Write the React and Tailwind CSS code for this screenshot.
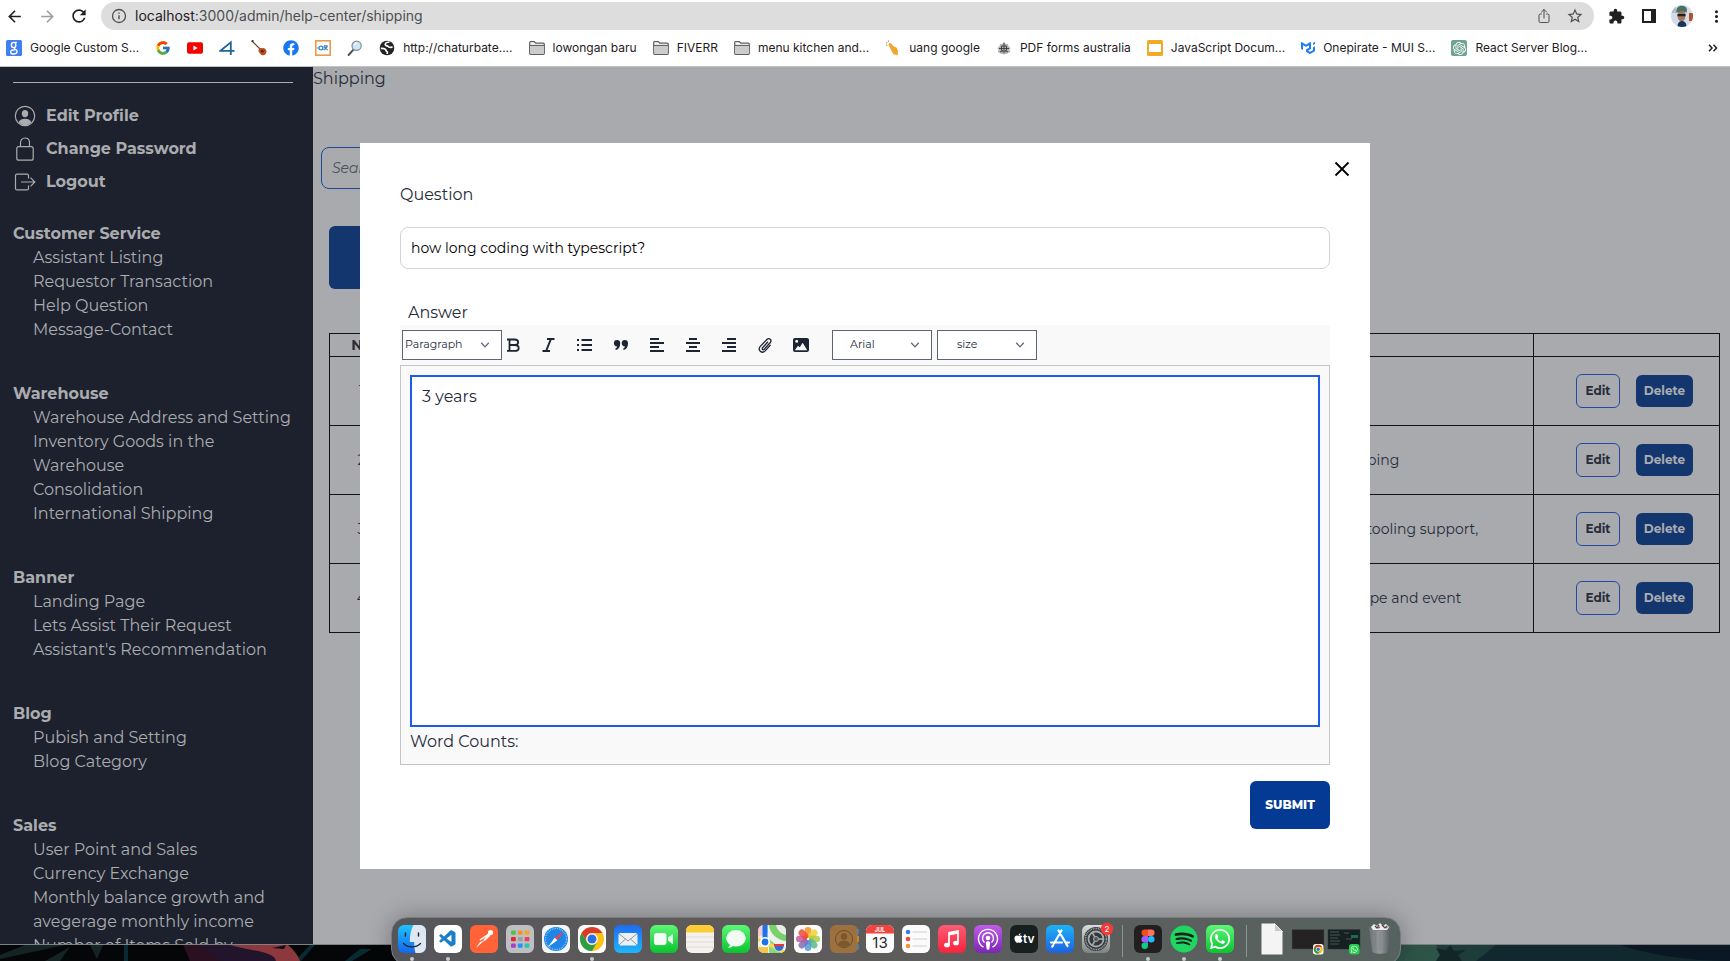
import React from "react";
import { FcGoogle } from "react-icons/fc";
import { FaSpotify, FaWhatsapp, FaApple, FaFacebook } from "react-icons/fa";
import { MdRefresh, MdArrowBack, MdArrowForward, MdExtension, MdStarBorder, MdMoreVert } from "react-icons/md";
import { SiOpenai, SiMui } from "react-icons/si";
import { IoShareOutline } from "react-icons/io5";
import { VscVscode } from "react-icons/vsc";

/* ---------- Browser chrome ---------- */

function FolderIcon() {
  return (
    <svg viewBox="0 0 16 16" className="size-4">
      <path d="M.7 13.3V2.6c0-.6.4-1 1-1h3.6l1.4 1.6h7.6c.6 0 1 .4 1 1v9.1c0 .6-.4 1-1 1H1.7c-.6 0-1-.4-1-1z" fill="#fff" stroke="#5c5c5c" strokeWidth="1.2" />
      <path d="M1.3 5.9h13.4v7.8H1.3z" fill="#cbcbcb" />
      <path d="M.7 5.4h14.6" stroke="#5c5c5c" strokeWidth="1.1" />
    </svg>
  );
}

function GoogleSquareIcon() {
  return (
    <svg viewBox="0 0 16 16" className="size-4">
      <rect width="16" height="16" rx="1.5" fill="#3f7ff0" />
      <g fill="none" stroke="#fff" strokeWidth="1.4">
        <ellipse cx="7.6" cy="5" rx="2.2" ry="2.6" />
        <path d="M8.3 2.4h2.6M9.2 7.3c-1 .8-1 1.2.2 2 1.4.8 1.7 1.4 1.7 2.3 0 1.600-1.600 2.400-3.500 2.400-2 0-3-.9-3-2.100 0-1.600 2-2.200 4.400-2.200" />
      </g>
    </svg>
  );
}

function YoutubeIcon() {
  return (
    <svg viewBox="0 0 16 16" className="size-4">
      <rect y="2.300" width="16" height="11.400" rx="2" fill="#f60000" />
      <path d="M6.400 5.600v4.800l4.200-2.400z" fill="#fff" />
    </svg>
  );
}

function FourIcon() {
  return (
    <svg viewBox="0 0 16 16" className="size-4">
      <path d="M11.800 15V2.300L1.500 10.800h14" fill="none" stroke="#1d6596" strokeWidth="1.800" />
    </svg>
  );
}

function GuitarIcon() {
  return (
    <svg viewBox="0 0 16 16" className="size-4">
      <path d="M1 1l9 9" stroke="#6b3a1e" strokeWidth="1.200" />
      <path d="M.5 1.500L2.500.5" stroke="#3b2a20" strokeWidth="1.500" />
      <path d="M8.200 8.800c1.300-1.400 2.400-.2 3.400-.6 1.400-.5 3.800.7 3.900 3.300 0 2.700-1.900 4.200-4.200 3.800-2-.4-1.800-1.600-2.800-2.500-1.200-1-1.400-2.700-.3-4z" fill="#b8501d" />
      <circle cx="11.300" cy="11.200" r="1.300" fill="#4a1d0b" />
    </svg>
  );
}

function OrangeFrameIcon() {
  return (
    <svg viewBox="0 0 16 16" className="size-4">
      <rect x=".8" y=".8" width="14.400" height="14.400" fill="#fff" stroke="#eb9a45" strokeWidth="1.600" />
      <g fill="none" stroke="#3e87c3" strokeWidth="1.200">
        <circle cx="6" cy="8" r="1.900" />
        <path d="M2 8h2M8.600 6.200l4 3.800M12.600 6.200l-4 3.800M9 5.800h3.600" />
      </g>
    </svg>
  );
}

function MagnifierIcon() {
  return (
    <svg viewBox="0 0 16 16" className="size-4">
      <path d="M6.200 9.800L1.600 15" stroke="#4b4f55" strokeWidth="1.900" strokeLinecap="round" />
      <circle cx="9.600" cy="5.800" r="4.600" fill="#cfe6f5" stroke="#868c93" strokeWidth="1.200" />
      <path d="M7.200 5.200c.4-1.300 1.300-2 2.600-2.100" fill="none" stroke="#fff" strokeWidth="1.200" />
    </svg>
  );
}

function GlobeIcon() {
  return (
    <svg viewBox="0 0 16 16" className="size-4">
      <circle cx="8" cy="8" r="7.300" fill="#222427" />
      <path d="M10.500 2c-2 .2-4.300 1-4.300 2.600 0 1.500 2.800 1 3.200 2.200.2.700 2 .6 4.200.4M1.800 8.400c2.400-.2 4.300 0 4.900 1.300.4 1 .3 1.600 1.400 2 .7.300.2 1.300.1 2.300" fill="none" stroke="#fff" strokeWidth="1.700" />
    </svg>
  );
}

function HandIcon() {
  return (
    <svg viewBox="0 0 16 16" className="size-4">
      <path d="M4 3.500c.8-.9 1.800-.5 2.300.2l2.500 2.800 2.700.9 1.500 3.500-.5 4.500-4.200-1.300-1.600-3.200-3-5.600c-.3-.6-.1-1.200.3-1.800z" fill="#f5a42c" />
      <path d="M2.200 5.800C.6 3.600 1.600 1.200 4.600.8" fill="none" stroke="#b9945e" strokeWidth="1.100" strokeDasharray="1.500 1" />
    </svg>
  );
}

function CrestIcon() {
  return (
    <svg viewBox="0 0 16 16" className="size-4">
      <path d="M8 1.500l1.400 2.300 2.400.2 1 2.500 1.900 2-1.400 1.200 1 2.300-2.800 1.400L8 14.500l-3.500-1.100-2.800-1.400 1-2.300-1.400-1.200 1.900-2 1-2.500 2.400-.2z" fill="#b5b5b5" />
      <path d="M5.500 6h5v4L8 12.500 5.500 10zM8 3v9M3 8.500h10M4 12l3-1.500M12 12l-3-1.500" fill="none" stroke="#444" strokeWidth="1" />
    </svg>
  );
}

function SlidesIcon() {
  return (
    <svg viewBox="0 0 16 16" className="size-4">
      <rect width="16" height="16" rx="1.500" fill="#f2a928" />
      <rect x="2" y="4" width="12" height="8" fill="#fff" />
    </svg>
  );
}

function OpenAiIcon() {
  return (
    <span className="flex size-4 items-center justify-center rounded-xs bg-[#6fa394] text-white">
      <SiOpenai size={13} />
    </span>
  );
}

const BOOKMARKS = [
  { label: "Google Custom S...", icon: <GoogleSquareIcon /> },
  { name: "Google", icon: <FcGoogle size={16} /> },
  { name: "YouTube", icon: <YoutubeIcon /> },
  { name: "Four", icon: <FourIcon /> },
  { name: "Guitar", icon: <GuitarIcon /> },
  { name: "Facebook", icon: <FaFacebook size={16} color="#1877f2" /> },
  { name: "Editor", icon: <OrangeFrameIcon /> },
  { name: "Search", icon: <MagnifierIcon /> },
  { label: "http://chaturbate....", icon: <GlobeIcon /> },
  { label: "lowongan baru", icon: <FolderIcon /> },
  { label: "FIVERR", icon: <FolderIcon /> },
  { label: "menu kitchen and...", icon: <FolderIcon /> },
  { label: "uang google", icon: <HandIcon /> },
  { label: "PDF forms australia", icon: <CrestIcon /> },
  { label: "JavaScript Docum...", icon: <SlidesIcon /> },
  { label: "Onepirate - MUI S...", icon: <SiMui size={14} color="#1a7ef5" /> },
  { label: "React Server Blog...", icon: <OpenAiIcon /> },
];

function BrowserBar() {
  return (
    <header className="shrink-0 border-b border-[#bfc4c2] bg-white font-['Inter',sans-serif] text-[#1f2023]">
      <div className="flex items-center pt-[2px] pr-1 pl-[5px]">
        <button aria-label="Back" className="mr-[14px]"><MdArrowBack size={19} /></button>
        <button aria-label="Forward" className="mr-3 text-[#9d9d9d]"><MdArrowForward size={19} /></button>
        <button aria-label="Reload" className="mr-3"><MdRefresh size={20} /></button>
        <div className="flex h-7 flex-1 items-center rounded-full bg-[#dddddd] px-2.5 text-[#4d4f53]">
          <svg viewBox="0 0 16 16" className="mr-2 size-4">
            <circle cx="8" cy="8" r="6.500" fill="none" stroke="currentColor" strokeWidth="1.300" />
            <path d="M8 7.200v4M8 4.400v1.400" stroke="currentColor" strokeWidth="1.400" />
          </svg>
          <p className="flex-1 text-sm">
            <span className="text-[#1f2023]">localhost</span>:3000/admin/help-center/shipping
          </p>
          <button aria-label="Share" className="mr-3.5"><IoShareOutline size={16} /></button>
          <button aria-label="Bookmark"><MdStarBorder size={18} /></button>
        </div>
        <button aria-label="Extensions" className="ml-3.5 mr-4"><MdExtension size={17} /></button>
        <button aria-label="Side panel" className="mr-3.5">
          <svg viewBox="0 0 16 16" className="size-4">
            <path d="M2 2h12v12H2z" fill="none" stroke="currentColor" strokeWidth="2" />
            <path d="M10 1h5v14h-5z" fill="currentColor" />
          </svg>
        </button>
        <button aria-label="Account" className="mr-3.5">
          <svg viewBox="0 0 22 22" className="size-[22px]">
            <clipPath id="avatar"><circle cx="11" cy="11" r="11" /></clipPath>
            <g clipPath="url(#avatar)">
              <path d="M0 0h22v22H0z" fill="#d4dcea" />
              <path d="M18 8h4v8h-4z" fill="#b5502d" />
              <path d="M0 0h5v8H0z" fill="#a9bdd3" />
              <ellipse cx="10.500" cy="10.500" rx="4" ry="6" fill="#a4765c" />
              <path d="M5.500 8C4.500 2.500 8 .5 11 .8c4 .2 6 3 4.500 7-2-2-6-2.500-10 .2z" fill="#4b7066" />
              <path d="M6.500 9h8v2.200h-8z" fill="#1c2329" />
              <path d="M6.500 22c0-4 2-6 4.500-6s4.500 2 4.500 6z" fill="#17345c" />
            </g>
          </svg>
        </button>
        <button aria-label="Menu"><MdMoreVert size={19} /></button>
      </div>
      <nav className="flex h-9 items-center gap-4 pl-1.5 pr-3 text-xs">
        {BOOKMARKS.map((b) => (
          <a key={b.label || b.name} href="#" aria-label={b.label || b.name} className="flex shrink-0 items-center gap-2">
            {b.icon}
            {b.label && <span>{b.label}</span>}
          </a>
        ))}
        <button aria-label="More bookmarks" className="ml-auto text-[#1f2023]">
          <svg viewBox="0 0 10 8" className="h-2 w-2.5">
            <path d="M1 .8L4 4 1 7.200M5.500.8l3 3.200-3 3.200" fill="none" stroke="currentColor" strokeWidth="1.500" />
          </svg>
        </button>
      </nav>
    </header>
  );
}

/* ---------- Admin page ---------- */

const ACCOUNT_LINKS = [
  {
    label: "Edit Profile",
    icon: (
      <svg viewBox="0 0 22 22" className="size-[22px]">
        <circle cx="11" cy="11" r="9.700" fill="none" stroke="currentColor" strokeWidth="1.200" />
        <ellipse cx="11" cy="8.600" rx="3.200" ry="3.700" fill="currentColor" />
        <path d="M4.500 17.200c1.200-2.500 3.500-3.500 6.500-3.500s5.300 1 6.500 3.500c-1.700 1.900-4 3-6.500 3s-4.800-1.100-6.500-3z" fill="currentColor" />
      </svg>
    ),
  },
  {
    label: "Change Password",
    icon: (
      <svg viewBox="0 0 22 24" className="h-6 w-[22px]" fill="none" stroke="currentColor" strokeWidth="1.200">
        <rect x="2.800" y="9.600" width="16.400" height="13.600" rx="2" />
        <path d="M6.500 9.600V5.700C6.500 3 8.300 1 11 1s4.500 2 4.500 4.700v3.900" />
      </svg>
    ),
  },
  {
    label: "Logout",
    icon: (
      <svg viewBox="0 0 22 22" className="size-[22px]" fill="none" stroke="currentColor" strokeWidth="1.200">
        <path d="M14.500 7.500V4.600c0-.8-.7-1.500-1.500-1.500H3c-.8 0-1.500.7-1.500 1.500v12.800c0 .8.700 1.500 1.500 1.500h10c.8 0 1.500-.7 1.500-1.500v-2.900M7 11h13.500M16.500 6.700l4.300 4.300-4.300 4.300" />
      </svg>
    ),
  },
];

const MENU = [
  { title: "Customer Service", items: [["Assistant Listing"], ["Requestor Transaction"], ["Help Question"], ["Message-Contact"]] },
  { title: "Warehouse", items: [["Warehouse Address and Setting"], ["Inventory Goods in the", "Warehouse"], ["Consolidation"], ["International Shipping"]] },
  { title: "Banner", items: [["Landing Page"], ["Lets Assist Their Request"], ["Assistant's Recommendation"]] },
  { title: "Blog", items: [["Pubish and Setting"], ["Blog Category"]] },
  { title: "Sales", items: [["User Point and Sales"], ["Currency Exchange"], ["Monthly balance growth and", "avegerage monthly income"], ["Number of Items Sold by"]] },
];

function Sidebar() {
  return (
    <aside className="w-[313px] shrink-0 overflow-hidden bg-[#1c212d] px-[13px] pt-[15px] text-base text-[#abacb0]">
      <hr className="mr-[7px] border-[#abacb0]" />
      <ul className="mt-4 mb-6">
        {ACCOUNT_LINKS.map((l) => (
          <li key={l.label}>
            <a href="#" className="flex h-[33px] items-center gap-2.5 pl-px font-bold">
              {l.icon}
              {l.label}
            </a>
          </li>
        ))}
      </ul>
      {MENU.map((group) => (
        <section key={group.title} className="mb-10 whitespace-nowrap">
          <h2 className="font-bold">{group.title}</h2>
          <ul className="pl-5">
            {group.items.map((lines) => (
              <li key={lines[0]}>
                <a href="#">
                  {lines.map((line) => (
                    <span key={line} className="block">{line}</span>
                  ))}
                </a>
              </li>
            ))}
          </ul>
        </section>
      ))}
    </aside>
  );
}

const ROWS = [
  ["How long coding with typescript?", "3 years"],
  ["How is it delivered?", "It depends on your shipping"],
  ["What is it used for?", "Static typing gives the code better tooling support,"],
  ["What is checked?", "It covers both of the props, the type and event"],
];

function HelpPage() {
  return (
    <main className="min-w-0 flex-1 bg-[#a9aaae] text-[#262c3a]">
      <h1 className="text-base">Shipping</h1>
      <input
        aria-label="Search"
        placeholder="Search"
        className="mt-14 ml-2 block h-[42px] w-72 rounded-lg border border-[#1e4a96] px-2.5 text-sm italic placeholder:text-[#4d525d]"
      />
      <button className="mt-[37px] ml-4 block h-[63px] w-48 rounded-md bg-[#14366f] text-sm font-bold text-[#abacb0]">Add Question</button>
      <div className="mt-11 mr-2.5 ml-4">
        <table className="w-full table-fixed border-collapse text-sm [&_td]:border [&_td]:border-[#101216] [&_th]:border [&_th]:border-[#101216]">
          <colgroup>
            <col className="w-16" />
            <col />
            <col className="w-[466px]" />
            <col className="w-[186px]" />
          </colgroup>
          <thead>
            <tr className="h-[23px]">
              <th>No</th>
              <th>Question</th>
              <th></th>
              <th></th>
            </tr>
          </thead>
          <tbody className="text-center">
            {ROWS.map(([q, a], i) => (
              <tr key={q} className="h-[69px]">
                <td>{i + 1}</td>
                <td>{q}</td>
                <td>{a}</td>
                <td>
                  <div className="flex items-center justify-center gap-4 pl-4 text-xs font-bold">
                    <button className="h-[34px] w-11 rounded-md border border-[#2549a0]">Edit</button>
                    <button className="h-8 w-[57px] rounded-md bg-[#14366f] text-[#abacb0]">Delete</button>
                  </div>
                </td>
              </tr>
            ))}
          </tbody>
        </table>
      </div>
    </main>
  );
}

/* ---------- Modal ---------- */

const TOOLS = [
  ["Bold", <path d="M2 2.500h7.500c2.500 0 3.700 1 3.700 2.700 0 1.600-1.200 2.800-3.700 2.800H5.200M9.500 8c2.800 0 4.200 1.200 4.200 2.900 0 1.900-1.400 3-4.200 3H2M4.500 2.500v11.400" fill="none" stroke="currentColor" strokeWidth="1.800" />],
  ["Italic", <path d="M6 2h7.500M1.500 14h7.500M9.900 2L5.100 14" fill="none" stroke="currentColor" strokeWidth="2" />],
  ["List", <path d="M0 3h2M0 8h2M0 13h2M4.500 3H15M4.500 8H15M4.500 13H15" fill="none" stroke="currentColor" strokeWidth="2" />],
  ["Quote", <path d="M4 3a3.200 3.200 0 0 1 3.200 3.200c0 3.700-1.400 6.300-4.400 6.900l-.5-1.400c1-.5 1.700-1.300 1.900-2.300A3.200 3.200 0 0 1 4 3zM11.800 3A3.200 3.200 0 0 1 15 6.200c0 3.700-1.400 6.300-4.400 6.900l-.5-1.400c1-.5 1.700-1.300 1.900-2.300A3.200 3.200 0 0 1 11.800 3z" fill="currentColor" />],
  ["Align left", <path d="M1 2h9M1 6h14M1 10h9M1 14h14" fill="none" stroke="currentColor" strokeWidth="2" />],
  ["Align center", <path d="M4 2h8M1 6h14M4 10h8M1 14h14" fill="none" stroke="currentColor" strokeWidth="2" />],
  ["Align right", <path d="M6 2h9M1 6h14M6 10h9M1 14h14" fill="none" stroke="currentColor" strokeWidth="2" />],
  ["Attach", <path d="M11 4.800L5.600 10.700c-1.200 1.400.5 2.800 1.700 1.500l6-6.700c2-2.400-1.100-5.300-3.400-3L3.300 9.400c-3 3.500 1.400 7.800 4.900 4.500l5.400-6" fill="none" stroke="currentColor" strokeWidth="1.300" />],
  ["Image", <path fillRule="evenodd" d="M2 1h12c1.100 0 2 .9 2 2v10c0 1.100-.9 2-2 2H2c-1.100 0-2-.9-2-2V3c0-1.100.9-2 2-2zm-.2 12.300h12.400L9.700 5.800l-3 4.400-1.700-1.500zM3.700 2.800a1.500 1.500 0 1 0 0 3 1.500 1.500 0 0 0 0-3z" fill="currentColor" />],
];

function ToolbarSelect({ label, value, className }) {
  return (
    <div className="relative w-[100px]">
      <select
        aria-label={label}
        defaultValue={value}
        className={"block h-[30px] w-full appearance-none border border-[#5d6575] bg-white text-[11px] text-[#262c3a] " + className}
      >
        <option>{value}</option>
      </select>
      <svg viewBox="0 0 10 6" className="pointer-events-none absolute top-3 right-3 h-1.5 w-2.5">
        <path d="M1.200.8L5 4.900 8.800.8" fill="none" stroke="#5d6575" strokeWidth="1.300" />
      </svg>
    </div>
  );
}

function QuestionModal() {
  return (
    <div className="absolute inset-0 flex items-center justify-center">
      <form role="dialog" aria-label="Edit question" className="relative w-full max-w-[1010px] bg-white px-10 pt-10 pb-10 text-base text-[#262c3a]">
        <button type="button" aria-label="Close" className="absolute top-[18px] right-5 text-black">
          <svg viewBox="0 0 16 16" className="size-4">
            <path d="M1.500 1.500l13 13M14.500 1.500l-13 13" stroke="currentColor" strokeWidth="1.800" />
          </svg>
        </button>
        <label htmlFor="question" className="block">Question</label>
        <input
          id="question"
          defaultValue="how long coding with typescript?"
          className="mt-5 block h-[42px] w-full rounded-lg border border-[#d1d5db] px-2.5 text-sm text-black"
        />
        <label htmlFor="answer" className="mt-8 block pl-2">Answer</label>
        <div className="flex h-10 items-center bg-[#f9f9f9] pl-0.5">
          <ToolbarSelect label="Block type" value="Paragraph" className="pl-0.5" />
          <div className="mr-[23px] ml-[3px] flex gap-5">
            {TOOLS.map(([name, shape]) => (
              <button key={name} type="button" aria-label={name} className="text-[#1e2532]">
                <svg viewBox="0 0 16 16" className="size-4">{shape}</svg>
              </button>
            ))}
          </div>
          <div className="flex gap-[5px]">
            <ToolbarSelect label="Font" value="Arial" className="pl-[17px]" />
            <ToolbarSelect label="Font size" value="size" className="pl-[19px]" />
          </div>
        </div>
        <div className="border border-[#c4c4c4] bg-[#f9f9f9] px-[9px] pt-[9px] pb-2.5">
          <textarea
            id="answer"
            defaultValue="3 years"
            className="block h-[352px] w-full resize-none border-2 border-[#1d5ce8] bg-white px-2.5 py-2 outline-none"
          />
          <p className="pt-[3px]">Word Counts:</p>
        </div>
        <button type="button" className="mt-4 ml-auto block h-12 w-20 rounded-md bg-[#053a94] text-xs font-extrabold text-white">SUBMIT</button>
      </form>
    </div>
  );
}

/* ---------- Desktop ---------- */

function Wallpaper() {
  return (
    <div className="h-4 shrink-0 overflow-hidden bg-[#050607]">
      <svg viewBox="0 0 1730 16" preserveAspectRatio="none" className="h-4 w-full">
        <path d="M0 10L25 0h40L0 14zM45 16L70 2 60 16zM90 0h13l-6 14z" fill="#142425" />
        <path d="M124 0h4v16h-4zM310 0h5l-14 16h-6zM345 16l15-12h12l-20 12z" fill="#0a2a33" />
        <path d="M183 0h70l30 16h-93z" fill="#2a1020" />
        <path d="M200 0h60l20 16h-60z" fill="#21142b" />
        <path d="M230 0h58c6 5 10 10 12 16h-24c-2-10-26-10-46-16z" fill="#8c383d" />
        <path d="M272 3l14-3-2 4z" fill="#120d12" />
        <path d="M1390 0h340v16h-340z" fill="#12282f" />
        <path d="M1390 0h46l20 16h-66z" fill="#2e5448" />
        <path d="M1436 0h60l-20 16h-30z" fill="#1d3c3a" />
        <path d="M1436 3l10 2 4-5 4 6 12-1-8 5 4 6h-26l4-6z" fill="#122626" />
        <path d="M1620 0h110v16c-40 0-80-6-110-16z" fill="#0b1722" />
      </svg>
    </div>
  );
}

function Tile({ fill, children }) {
  return (
    <svg viewBox="0 0 28 28" className="size-7 overflow-visible">
      <rect width="28" height="28" rx="6" fill={fill} />
      {children}
    </svg>
  );
}

function ChromeMark({ cx, cy, r }) {
  const s = r / 12;
  return (
    <g transform={`translate(${cx} ${cy}) scale(${s})`}>
      <circle r="12" fill="#fbc116" />
      <path d="M-10.400-6A12 12 0 0 1 10.400-6H0A6 6 0 0 0-5.200 3z" fill="#db3a2d" />
      <path d="M-10.400-6A12 12 0 0 0 0 12L5.200 3A6 6 0 0 1-5.200 3z" fill="#2a9f47" />
      <circle r="5.800" fill="#fff" />
      <circle r="4.500" fill="#2b6fe3" />
    </g>
  );
}

const PHOTO_PETALS = ["#f6921e", "#f3cf2f", "#a6ce45", "#5bb88b", "#4f9ed6", "#7c6fb8", "#c25b9b", "#ee4a3c"];
const LAUNCH_DOTS = ["#4fc34d", "#f58f2a", "#f5a623", "#e5262a", "#9aa0a6", "#f53d63", "#a23fd0", "#2196f3", "#2fc4b2"];
const GEAR_ANGLES = [0, 120, 240];

function DockGradients() {
  return (
    <svg className="absolute size-0" aria-hidden="true">
      <defs>
        <linearGradient id="gFinder" x2="0" y2="1"><stop stopColor="#1fc3fb" /><stop offset="1" stopColor="#1466ec" /></linearGradient>
        <linearGradient id="gMail" x2="0" y2="1"><stop stopColor="#1e6bf0" /><stop offset="1" stopColor="#1eb6f8" /></linearGradient>
        <linearGradient id="gGreen" x2="0" y2="1"><stop stopColor="#5df777" /><stop offset="1" stopColor="#0ac32f" /></linearGradient>
        <linearGradient id="gRed" x2="0" y2="1"><stop stopColor="#fb5c74" /><stop offset="1" stopColor="#fa233b" /></linearGradient>
        <linearGradient id="gPurple" x2="0" y2="1"><stop stopColor="#c35bea" /><stop offset="1" stopColor="#7b27b3" /></linearGradient>
        <linearGradient id="gBlue" x2="0" y2="1"><stop stopColor="#1cb3f7" /><stop offset="1" stopColor="#1e62e0" /></linearGradient>
        <linearGradient id="gGrey" x2="0" y2="1"><stop stopColor="#d7dde0" /><stop offset="1" stopColor="#7f8384" /></linearGradient>
        <linearGradient id="gTrash"><stop stopColor="#6f7274" /><stop offset=".5" stopColor="#96999b" /><stop offset="1" stopColor="#55585a" /></linearGradient>
      </defs>
    </svg>
  );
}

const APPS = [
  { name: "Finder", running: true, icon: (
    <Tile fill="url(#gFinder)">
      <path d="M15.500 0H22a6 6 0 0 1 6 6v16a6 6 0 0 1-6 6h-4.500c-1-3.500-1.300-7-1.300-11H11.800C11.800 10 13 4.500 15.500 0z" fill="#dfe7f2" />
      <path d="M7.500 8v3M20.500 8v3M5.500 18.500c4.500 4.500 12.500 4.500 17 0" fill="none" stroke="#1c2530" strokeWidth="1.400" strokeLinecap="round" />
    </Tile>) },
  { name: "Visual Studio Code", running: true, icon: (
    <Tile fill="#fff"><g color="#1b7ec8"><VscVscode x="4" y="4" size={20} /></g></Tile>) },
  { name: "Postman", icon: (
    <Tile fill="#ff6337">
      <path d="M6 23l4-6 3-1 4.500-7 2-.5 1 2-4 4-4.500 3z" fill="#fff" />
      <circle cx="20.500" cy="7.500" r="2.600" fill="#fff" />
      <path d="M10 15l9-6" stroke="#fff" strokeWidth="1.500" />
    </Tile>) },
  { name: "Launchpad", icon: (
    <Tile fill="#bdbfc3">
      {LAUNCH_DOTS.map((c, i) => (
        <rect key={c} x={5 + (i % 3) * 6.8} y={5.5 + Math.floor(i / 3) * 6.5} width="4.800" height="4.300" rx="1" fill={c} />
      ))}
    </Tile>) },
  { name: "Safari", icon: (
    <Tile fill="#f3f5f6">
      <circle cx="14" cy="14" r="12" fill="#1f86e8" />
      <circle cx="14" cy="14" r="10.500" fill="none" stroke="#bfe0fa" strokeWidth="1.300" strokeDasharray=".6 1.200" />
      <path d="M22.500 5.500l-7.200 9.800-2.600-2.600z" fill="#f2423b" />
      <path d="M5.500 22.500l7.200-9.800 2.600 2.600z" fill="#fff" />
    </Tile>) },
  { name: "Chrome", running: true, icon: (<Tile fill="#fff"><ChromeMark cx="14" cy="14" r="12" /></Tile>) },
  { name: "Mail", icon: (
    <Tile fill="url(#gMail)">
      <rect x="4.500" y="8" width="19" height="12.500" rx="1.800" fill="#eef1f4" />
      <path d="M5 8.800l9 7.200 9-7.200M5 20l6.500-6M23 20l-6.500-6" fill="none" stroke="#8b98a5" strokeWidth="1" />
    </Tile>) },
  { name: "FaceTime", icon: (
    <Tile fill="url(#gGreen)">
      <rect x="4" y="8" width="12.500" height="12" rx="2.800" fill="#f4fbf5" />
      <path d="M18 12.500l4-3.300c.5-.4 1-.2 1 .4v8.800c0 .6-.5.800-1 .4l-4-3.300z" fill="#e3f7e6" />
    </Tile>) },
  { name: "Notes", icon: (
    <Tile fill="#f5f2ee">
      <path d="M0 7.500V6a6 6 0 0 1 6-6h16a6 6 0 0 1 6 6v1.500z" fill="#fccc36" />
      <path d="M0 12h28M0 17h28M0 22h28" stroke="#d9d6d2" strokeWidth=".8" />
    </Tile>) },
  { name: "Messages", icon: (
    <Tile fill="url(#gGreen)">
      <ellipse cx="14" cy="13.300" rx="9.800" ry="8.300" fill="#f1fbf2" />
      <path d="M8 19c0 2-1 3-2.300 3.800 2.300.2 4.300-.6 5.800-2.300z" fill="#f1fbf2" />
    </Tile>) },
  { name: "Maps", icon: (
    <Tile fill="#eef0ea">
      <clipPath id="mapClip"><rect width="28" height="28" rx="6" /></clipPath>
      <g clipPath="url(#mapClip)">
        <path d="M0 0h10v8L0 12z" fill="#f7c9d3" />
        <path d="M11 0h17v16C19 15 12 9 11 0z" fill="#77d16c" />
        <path d="M18 0h10v10C23 9 19 5 18 0z" fill="#e9ebe6" />
        <path d="M11 14l17 14H11z" fill="#8bd77b" />
        <path d="M0 14l28 14" stroke="#f9d648" strokeWidth="3.500" />
        <path d="M0 22h10v6H0z" fill="#f2c64a" />
        <path d="M7 0v17" stroke="#1b72ec" strokeWidth="5" />
        <circle cx="7" cy="17" r="5" fill="#fff" />
        <circle cx="7" cy="17" r="3.400" fill="#1b72ec" />
      </g>
      <path d="M16 19.500h10c.3 3-.8 6-5 7-4.200-1-5.300-4-5-7z" fill="#2d6fd4" stroke="#fff" strokeWidth=".6" />
      <path d="M16 19h10v2.200H16z" fill="#e23a3a" />
    </Tile>) },
  { name: "Photos", icon: (
    <Tile fill="#fbfbfb">
      {PHOTO_PETALS.map((c, i) => (
        <rect key={c} x="10.700" y="2" width="6.600" height="11" rx="3.300" fill={c} fillOpacity=".85" transform={`rotate(${i * 45} 14 14)`} />
      ))}
    </Tile>) },
  { name: "Contacts", icon: (
    <Tile fill="#9d713f">
      <path d="M28 4v5M28 19.500v5" stroke="#3a8fd0" strokeWidth="1.500" />
      <path d="M28 11v6" stroke="#f08b2c" strokeWidth="1.500" />
      <g fill="none" stroke="#6f4d27" strokeWidth="1"><circle cx="14" cy="14" r="8.500" /></g>
      <circle cx="14" cy="11.500" r="3.200" fill="#7c572e" />
      <path d="M8 19.500c1-3 3-4 6-4s5 1 6 4c-3.500 3-8.500 3-12 0z" fill="#7c572e" />
    </Tile>) },
  { name: "Calendar", icon: (
    <Tile fill="#fbfbfb">
      <path d="M0 8.500V6a6 6 0 0 1 6-6h16a6 6 0 0 1 6 6v2.500z" fill="#f1443f" />
      <text x="14" y="6.800" textAnchor="middle" fontFamily="Inter" fontSize="5.500" fontWeight="700" fill="#fff">JUL</text>
      <text x="14" y="23" textAnchor="middle" fontFamily="Inter" fontSize="15" fill="#2b2b2b">13</text>
    </Tile>) },
  { name: "Reminders", icon: (
    <Tile fill="#fbfbfb">
      <path d="M10.500 7H25M10.500 14H25M10.500 21H25" stroke="#d0d0d0" strokeWidth="1.200" />
      <circle cx="6" cy="7" r="2.300" fill="#2f80f0" /><circle cx="6" cy="14" r="2.300" fill="#ef4444" /><circle cx="6" cy="21" r="2.300" fill="#f29433" />
    </Tile>) },
  { name: "Music", icon: (
    <Tile fill="url(#gRed)">
      <path d="M11 19.500V7.800L20 6v11.500" fill="none" stroke="#fff" strokeWidth="1.700" />
      <path d="M11 7.500l9-1.800v3L11 10.500z" fill="#fff" />
      <ellipse cx="9" cy="20" rx="2.900" ry="2.300" fill="#fff" /><ellipse cx="18" cy="18" rx="2.900" ry="2.300" fill="#fff" />
    </Tile>) },
  { name: "Podcasts", icon: (
    <Tile fill="url(#gPurple)">
      <g fill="none" stroke="#fff" strokeWidth="1.400">
        <path d="M9.500 22.200a9.500 9.500 0 1 1 9 0M10.500 17.500a5.500 5.500 0 1 1 7 0" />
      </g>
      <circle cx="14" cy="13" r="2.300" fill="#fff" />
      <path d="M11.800 17.800c0-2 4.400-2 4.400 0l-.8 6c-.3 1.300-2.500 1.300-2.800 0z" fill="#fff" />
    </Tile>) },
  { name: "TV", icon: (
    <Tile fill="#17201f">
      <g color="#fff"><FaApple x="3" y="7.500" size={11} /></g>
      <text x="13" y="18.200" fontFamily="Inter" fontSize="12" fontWeight="600" fill="#fff">tv</text>
    </Tile>) },
  { name: "App Store", icon: (
    <Tile fill="url(#gBlue)">
      <path d="M15.500 5.500L8 18.500M12.500 5.500L21.500 21M5 17.500h11M19.500 17.500H23M7 20.500l-.8 1.200" stroke="#fff" strokeWidth="2.200" strokeLinecap="round" />
    </Tile>) },
  { name: "Settings", icon: (
    <Tile fill="url(#gGrey)">
      <circle cx="14" cy="14" r="12" fill="#33383a" />
      <circle cx="14" cy="14" r="10.500" fill="none" stroke="#9fa3a5" strokeWidth="1.600" strokeDasharray="1 .7" />
      <circle cx="14" cy="14" r="7.500" fill="none" stroke="#a6aaac" strokeWidth="1.800" />
      {GEAR_ANGLES.map((a) => (
        <path key={a} d="M14 14H22" stroke="#a6aaac" strokeWidth="1.600" transform={`rotate(${a} 14 14)`} />
      ))}
      <circle cx="14" cy="14" r="2.500" fill="#54595b" stroke="#a6aaac" />
      <circle cx="25" cy="4" r="6.200" fill="#f53b37" />
      <text x="25" y="7" textAnchor="middle" fontFamily="Inter" fontSize="8" fill="#fff">2</text>
    </Tile>) },
  null,
  { name: "Figma", running: true, icon: (
    <Tile fill="#231f20">
      <g transform="translate(7.500 4.500) scale(.065)">
        <path d="M50 300a50 50 0 0 0 50-50v-50H50a50 50 0 0 0 0 100z" fill="#0acf83" />
        <path d="M0 150a50 50 0 0 1 50-50h50v100H50a50 50 0 0 1-50-50z" fill="#a259ff" />
        <path d="M0 50A50 50 0 0 1 50 0h50v100H50A50 50 0 0 1 0 50z" fill="#f24e1e" />
        <path d="M100 0h50a50 50 0 0 1 0 100h-50z" fill="#ff7262" />
        <circle cx="150" cy="150" r="50" fill="#1abcfe" />
      </g>
    </Tile>) },
  { name: "Spotify", running: true, icon: (
    <svg viewBox="0 0 28 28" className="size-7">
      <circle cx="14" cy="14" r="12" fill="#14201a" />
      <g color="#1fd662"><FaSpotify size={28} /></g>
    </svg>) },
  { name: "WhatsApp", running: true, icon: (<Tile fill="url(#gGreen)"><g color="#fff"><FaWhatsapp x="2.500" y="2.500" size={23} /></g></Tile>) },
  null,
  { name: "Document", icon: (
    <svg viewBox="0 0 28 28" className="size-7 overflow-visible">
      <path d="M3.500-1.500h13l8 8v23h-21z" fill="#f4f4f4" />
      <path d="M16.500-1.500v8h8z" fill="#c9c9c9" stroke="#fff" strokeWidth=".6" />
    </svg>) },
  { name: "Chrome window", icon: (
    <svg viewBox="0 0 28 28" className="size-7 overflow-visible">
      <path d="M-2 4.500h32V24H-2z" fill="#252223" stroke="#4e4e4e" strokeWidth=".5" />
      <rect x="19" y="19" width="10.500" height="10.500" rx="2.500" fill="#fff" />
      <ChromeMark cx="24.200" cy="24.200" r="4.500" />
    </svg>) },
  { name: "WhatsApp window", icon: (
    <svg viewBox="0 0 28 28" className="size-7 overflow-visible">
      <path d="M-2 4.500h32V24H-2z" fill="#15201f" stroke="#2b3a3a" strokeWidth=".5" />
      <path d="M0 7h9M0 10h10M0 13h8M0 16h10M0 19h9M14 8h5M16 14h6" stroke="#44575a" strokeWidth="1" />
      <path d="M21 10h7v3h-7z" fill="#1c6a54" />
      <rect x="19" y="19" width="10.500" height="10.500" rx="2.500" fill="#24cf4c" />
      <g color="#fff"><FaWhatsapp x="20.200" y="20.200" size={8} /></g>
    </svg>) },
  { name: "Trash", icon: (
    <svg viewBox="0 0 28 28" className="size-7 overflow-visible">
      <path d="M3 2.500h22l-3.200 24c-.5 3-15 3-15.500 0z" fill="url(#gTrash)" />
      <ellipse cx="14" cy="2.500" rx="11" ry="3" fill="#6c6f70" />
      <path d="M5 2l3-3 3 2 3-3 3 3 3-2 3 3-2 3H7z" fill="#eceeee" />
      <path d="M9 1l2 2 2-3M16 0l3 3 2-2" fill="none" stroke="#3a4750" strokeWidth="1.200" />
      <path d="M12 3l2-1M20 3l1.500-1" stroke="#c6574b" strokeWidth="1.400" />
      <path d="M9 7l1 18M14 7v19M19 7l-1 18" stroke="#7c7f81" strokeWidth=".8" />
    </svg>) },
];

function Dock() {
  return (
    <div className="pointer-events-none absolute inset-x-0 bottom-0 flex justify-center pl-[62px]">
      <DockGradients />
      <ul className="-mb-1 flex h-12 items-start gap-2 rounded-2xl border border-[#7a7c7f] bg-linear-to-r from-[#55565a] via-[#5f5a5a] via-30% to-[#56625f] px-1.5 pt-[7px] shadow-[0_0_24px_rgba(0,0,0,0.3)]">
        {APPS.map((app, i) =>
          app ? (
            <li key={app.name} aria-label={app.name} className="flex flex-col items-center gap-1">
              {app.icon}
              {app.running && <span className="size-1 rounded-full bg-[#c8caca]" />}
            </li>
          ) : (
            <li key={i} aria-hidden="true" className="flex w-2 justify-center">
              <span className="h-8 w-px bg-[#8d9593]" />
            </li>
          )
        )}
      </ul>
    </div>
  );
}

export default function App() {
  return (
    <div className="relative flex h-screen flex-col overflow-hidden font-['Montserrat','Inter',sans-serif]">
      <BrowserBar />
      <div className="relative flex min-h-0 flex-1 border-b border-[#7d8184]">
        <Sidebar />
        <HelpPage />
        <QuestionModal />
      </div>
      <Wallpaper />
      <Dock />
    </div>
  );
}
